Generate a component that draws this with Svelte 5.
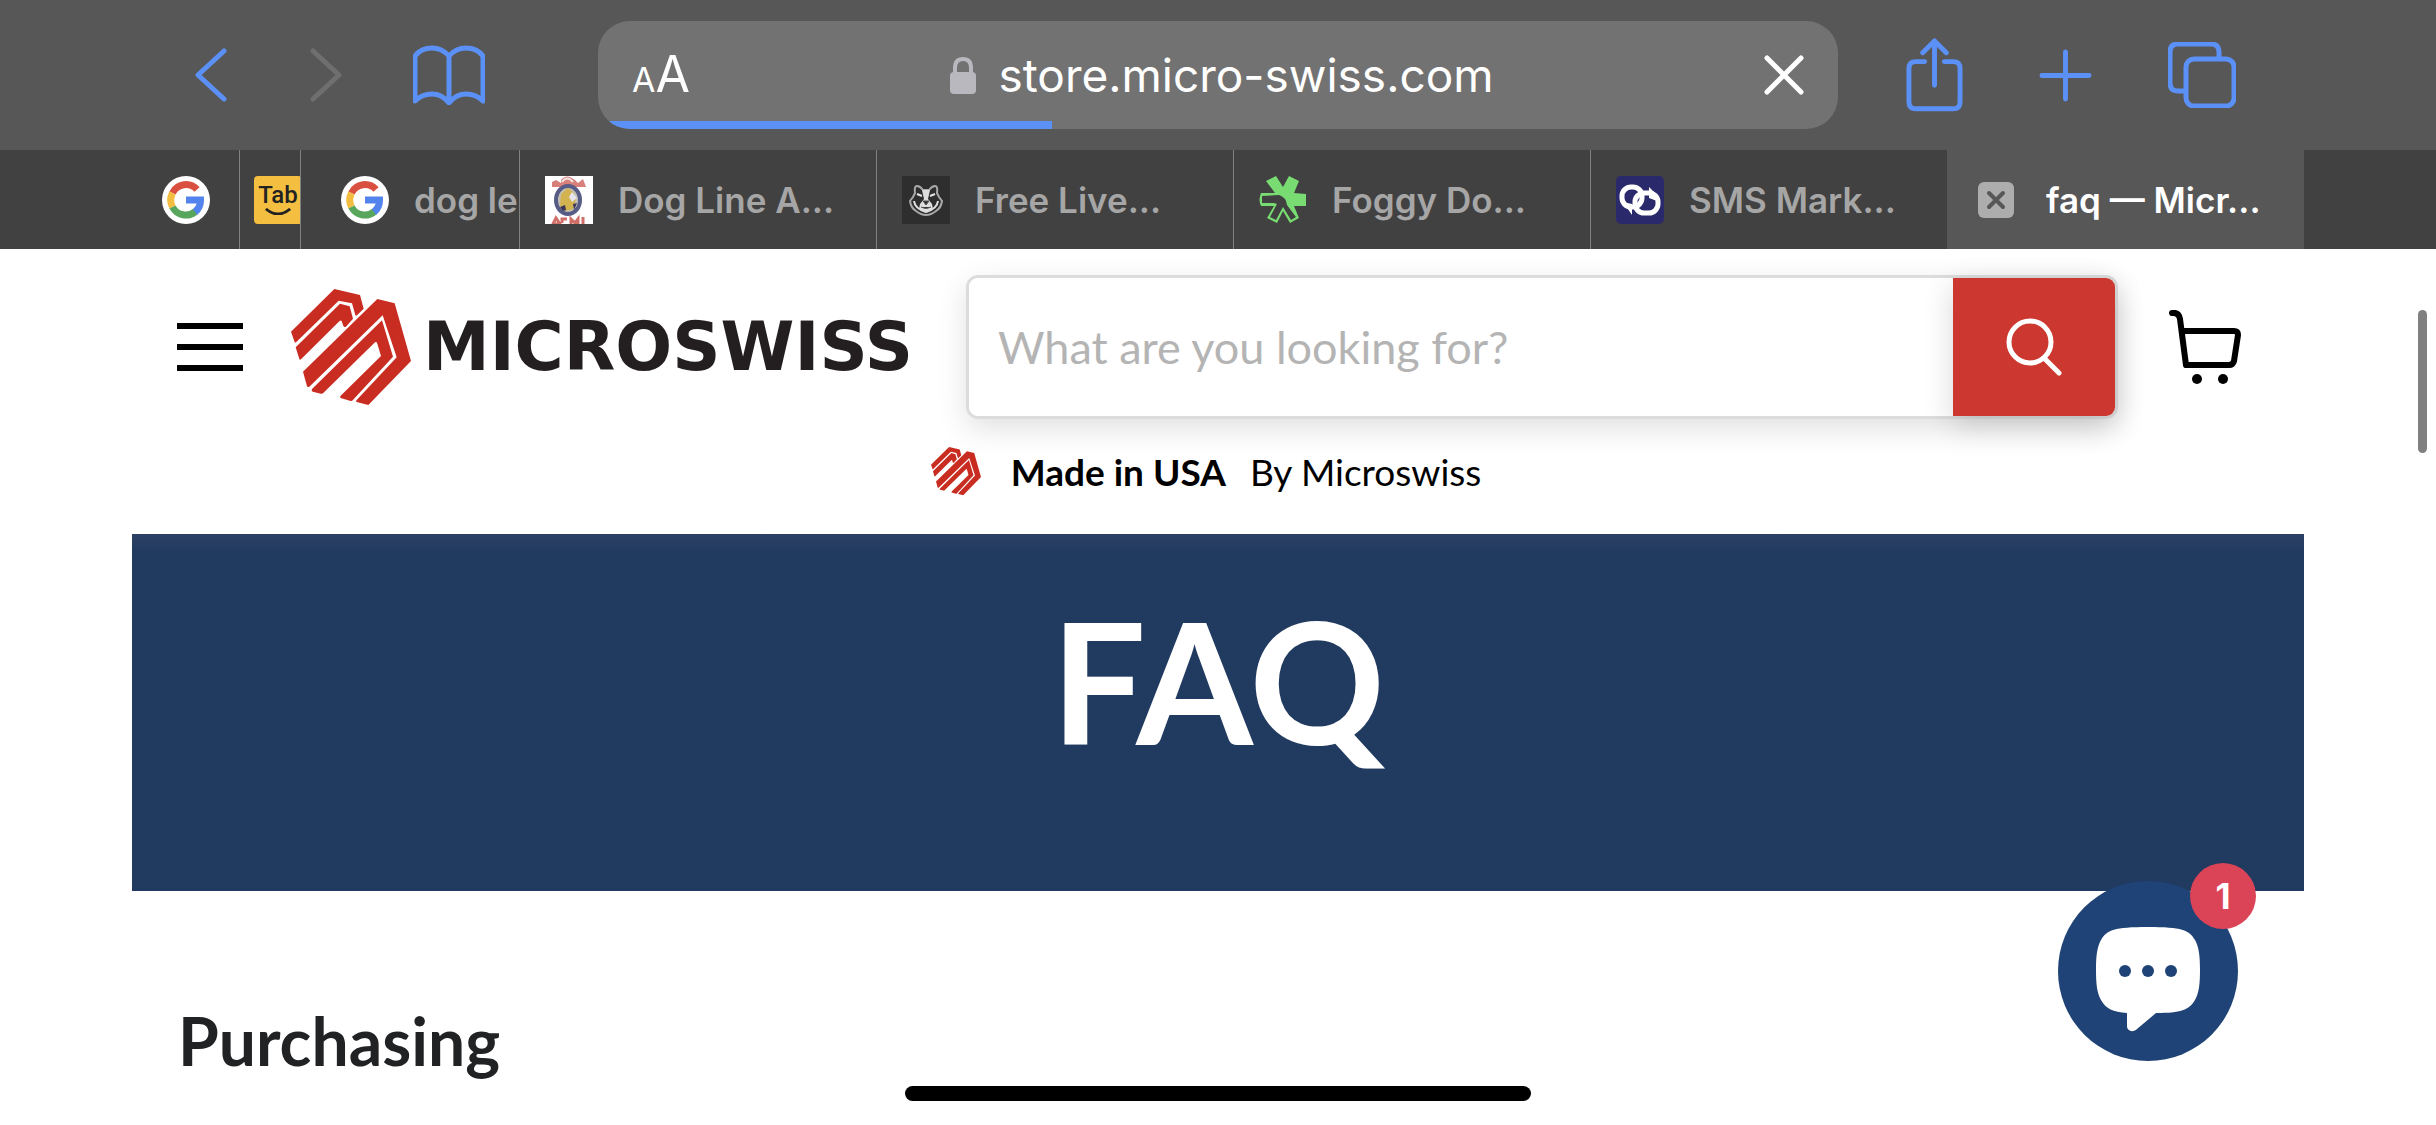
<script lang="ts">
  type Tab = { icon: string; title: string };

  const tabs: Tab[] = [
    { icon: 'google', title: '' },
    { icon: 'tab', title: '' },
    { icon: 'google', title: 'dog le' },
    { icon: 'crest', title: 'Dog Line A...' },
    { icon: 'husky', title: 'Free Live...' },
    { icon: 'clover', title: 'Foggy Do...' },
    { icon: 'rings', title: 'SMS Mark...' },
  ];

  let query = $state('');
  let address = $state('store.micro-swiss.com');
</script>

{#snippet emblem()}
  <svg class="emblem" viewBox="423 87 360 348" aria-hidden="true">
    <path d="M423 215 553 87l77 18 11 41-20 20q-4 2-5-1l-10-35-40-8-127 124q-5 4-6-2z" />
    <path d="m437 262 133-131 29 8 10 37-21 24q-5 3-8-2l-5-15q-2-4-7 1L453 298q-4 3-5-1z" />
    <path d="m459 335 223-218 52 13 49 173-128 132-35-9q-4-2 0-6l120-128-42-126-220 214q-4 3-7-1z" />
    <path d="m486 387 210-206 33 109-121 131q-2 3-6 2l-30-9q-4-2 0-7l121-119-12-40q-2-4-6-1L519 400q-2 2-6 1l-25-6q-5-3-2-8z" />
  </svg>
{/snippet}

{#snippet favicon(kind: string)}
  {#if kind === 'google'}
    <svg class="fav" viewBox="0 0 48 48" aria-hidden="true">
      <circle cx="24" cy="24" r="24" fill="#fff" />
      <g fill="none" stroke-width="7">
        <path d="M35 13.5A15 15 0 0 0 10.500 17" stroke="#d95040" />
        <path d="M10.500 17a15 15 0 0 0 0 14" stroke="#f3bd42" />
        <path d="M10.500 31A15 15 0 0 0 33.500 35.500" stroke="#58a55c" />
        <path d="M33 36a15 15 0 0 0 5.500-12H24" stroke="#5383ec" />
      </g>
    </svg>
  {:else if kind === 'tab'}
    <span class="fav tabfav"><b>Tab</b>
      <svg viewBox="0 0 30 8" aria-hidden="true"><path d="M2 1q13 11 26 0" fill="none" stroke="#222" stroke-width="3" /></svg>
    </span>
  {:else if kind === 'crest'}
    <svg class="fav" viewBox="0 0 48 48" aria-hidden="true">
      <path fill="#fff" d="M0 0h48v48H0z" />
      <path d="M7 11V6l4-2 5 3V4q4-5 9-3l5 3 3 3 5-4 3 8z" fill="#d8817b" />
      <path d="M17 6q5-7 11 0" fill="none" stroke="#f2e3e1" stroke-width="2" />
      <ellipse cx="23" cy="24" rx="12" ry="14" fill="#c5c0b4" stroke="#565c86" stroke-width="4" />
      <path d="m16 18 7-6 5 4 3 7-3 10-8 2-5-5z" fill="#d3b250" />
      <path d="m27 16 5 6-5 4-3-5z" fill="#e6e6f0" />
      <path d="m15 31 5-2 1 5-3 1zM28 28l4-1-3 7z" fill="#3c3558" />
      <path d="m8 48 3-6 4 6zM17 47v-4h5M26 48v-5l4 4 3-4v5M38 41v7" fill="none" stroke="#d06f68" stroke-width="3" />
    </svg>
  {:else if kind === 'husky'}
    <svg class="fav" viewBox="0 0 48 48" aria-hidden="true">
      <path fill="#2e2e2e" d="M0 0h48v48H0z" />
      <path d="M13 17q-1-7 2-7 3 0 6 4h6q3-4 6-4 3 0 2 7l2 4 3 4q-1 7-6 10-5 4-10 4t-10-4q-5-3-6-10l3-4z" fill="#2e2e2e" stroke="#a9a9a9" stroke-width="2" />
      <path d="M12 25q1 8 12 11 11-3 12-11" fill="none" stroke="#e3e3e3" stroke-width="2" />
      <path d="M20 14h8l-2 9 4 5 1 5q-7 5-14 0l1-5 4-5z" fill="#dedede" />
      <path d="m15 18 5 2m13-2-5 2" stroke="#e3e3e3" stroke-width="2" />
      <path d="M21 25h6l-3 4zM19 31q5 3 10 0" fill="#2e2e2e" stroke="#555" />
    </svg>
  {:else if kind === 'clover'}
    <svg class="fav" viewBox="0 0 48 48" aria-hidden="true">
      <path d="M7 5 17 0l7 11 6-11 10 5-5 12 12 1v12H35l5 12-9 5-7-12-6 12-10-5 7-12H2Q-1 24 2 17h14Z" fill="#78dc72" />
      <path d="m3 20 17-1q7 2 8 10l9 12-5 3-8-13-7 13-6-3 7-13-3-1H3z" fill="#414141" />
    </svg>
  {:else}
    <svg class="fav" viewBox="0 0 48 48" aria-hidden="true">
      <rect width="48" height="48" rx="5" fill="#29296c" />
      <g fill="none" stroke="#fff" stroke-width="5">
        <rect x="6" y="11" width="20" height="20" rx="9" />
        <rect x="19" y="17" width="23" height="20" rx="9" />
      </g>
      <path d="m7 26 9 13V28zM33 11l8 8v6l-8-3z" fill="#fff" />
    </svg>
  {/if}
{/snippet}

<div class="screen">
  <header class="browser">
    <div class="toolbar">
      <nav class="navigation" aria-label="Browser navigation">
        <button class="chev" aria-label="Back">
          <svg viewBox="0 0 32 54"><path d="M29 3 3 27l26 24" /></svg>
        </button>
        <button class="chev off" aria-label="Forward" disabled>
          <svg viewBox="0 0 32 54"><path d="m3 3 26 24L3 51" /></svg>
        </button>
        <button class="book" aria-label="Bookmarks">
          <svg viewBox="0 0 72 60"><path d="M36 11Q29 3 19 3 8 3 2 11v45q7-7 17-7t17 9q7-9 17-9t17 7V11Q64 3 53 3q-10 0-17 8zv46" /></svg>
        </button>
      </nav>

      <div class="address">
        <button class="aa" aria-label="Page settings"><span>A</span><span class="big">A</span></button>
        <label class="url">
          <svg class="lock" viewBox="0 0 26 37" aria-hidden="true">
            <rect y="15" width="26" height="22" rx="4" fill="#b9b8be" />
            <path d="M5 17v-6q0-9 8-9t8 9v6" fill="none" stroke="#b9b8be" stroke-width="4" />
          </svg>
          <input type="text" bind:value={address} size="21" aria-label="Address" />
        </label>
        <button class="stop" aria-label="Stop loading">
          <svg viewBox="0 0 40 40"><path d="m3 3 34 34M37 3 3 37" /></svg>
        </button>
        <div class="progress"></div>
      </div>

      <div class="actions">
        <button class="share" aria-label="Share">
          <svg viewBox="0 0 58 76"><path d="M19 24H10q-7 0-7 7v34q0 7 7 7h38q7 0 7-7V31q0-7-7-7h-9M29 48V3M17 15 29 3l12 12" /></svg>
        </button>
        <button class="plus" aria-label="New tab">
          <svg viewBox="0 0 54 54"><path d="M27 3v48M3 27h48" /></svg>
        </button>
        <button class="pages" aria-label="Show tabs">
          <svg viewBox="0 0 68 66"><path d="M16 49h-6q-8 0-8-8V10q0-8 8-8h33q8 0 8 8v5" /><rect x="18" y="17" width="48" height="47" rx="8" /></svg>
        </button>
      </div>
    </div>

    <div class="tabs">
      {#each tabs as tab}
        <button class="tab {tab.icon}" class:titled={tab.title !== ''} aria-label={tab.title || tab.icon}>
          {@render favicon(tab.icon)}
          {#if tab.title}<span class="title">{tab.title}</span>{/if}
        </button>
      {/each}
      <div class="tab active">
        <button class="close" aria-label="Close tab">
          <svg viewBox="0 0 36 36"><path d="m11 11 14 14M25 11 11 25" /></svg>
        </button>
        <span class="title">faq — Micr...</span>
      </div>
    </div>
  </header>

  <div class="store">
    <div class="masthead">
      <button class="menu" aria-label="Menu"><i></i><i></i><i></i></button>
      <a class="brand" href="#home">{@render emblem()}<span>MICROSWISS</span></a>
      <form class="search">
        <input type="search" bind:value={query} placeholder="What are you looking for?" aria-label="Search" />
        <button type="button" aria-label="Search">
          <svg viewBox="0 0 56 60"><circle cx="24" cy="25" r="21" /><path d="m38 41 15 15" /></svg>
        </button>
      </form>
      <a class="cart" href="#cart" aria-label="Cart">
        <svg viewBox="0 0 72 74">
          <path d="M3 3q7-1 8 6l6 46h43q4 0 5-4l4-26q0-4-4-4H13" fill="none" stroke="#000" stroke-width="6" stroke-linecap="round" stroke-linejoin="round" />
          <circle cx="28" cy="69" r="5" /><circle cx="54" cy="69" r="5" />
        </svg>
      </a>
    </div>
    <p class="origin">{@render emblem()}<strong>Made in USA</strong><span>By Microswiss</span></p>
  </div>

  <main>
    <section class="hero"><h1>FAQ</h1></section>
    <h2>Purchasing</h2>
  </main>

  <button class="chat" aria-label="Open chat, 1 new message">
    <svg viewBox="0 0 104 106" aria-hidden="true">
      <path d="M52 0C86 0 93 3 99 13c4 7 5 16 5 30s-1 23-5 30c-6 10-14 13-39 13L41 102c-4 4-10 2-10-3V86C17 85 10 82 5 73 1 66 0 57 0 43s1-23 5-30C11 3 18 0 52 0z" fill="#fff" />
      <g fill="#1f4376"><circle cx="29" cy="44" r="6" /><circle cx="52" cy="44" r="6" /><circle cx="75" cy="44" r="6" /></g>
    </svg>
    <span class="badge">1</span>
  </button>
  <div class="scrollbar"></div>
  <div class="home"></div>
</div>

<style>
  :global(body) { margin: 0; background: #fff; }
  .screen {
    position: relative;
    min-height: 100vh;
    overflow: hidden;
    font-family: Lato, sans-serif;
    color: #000;
  }
  button, input { font: inherit; color: inherit; border: 0; padding: 0; margin: 0; background: none; outline: 0; }
  button { cursor: pointer; }
  svg { display: block; width: 100%; }
  a { color: inherit; text-decoration: none; }

  .browser { background: #575757; font-family: Inter, sans-serif; }
  .toolbar { display: flex; align-items: center; height: 150px; padding: 0 200px 0 195px; box-sizing: border-box; }
  .navigation, .actions { display: flex; align-items: center; }
  .navigation { gap: 71px; margin-right: 113px; }
  .navigation svg, .actions svg { fill: none; stroke: #5b91f7; stroke-width: 5; stroke-linecap: round; stroke-linejoin: round; }
  .actions { gap: 76px; margin-left: 68px; }
  .chev { width: 32px; }
  .off { margin: 0 0 0 12px; }
  .navigation .off svg { stroke: #6f6f6f; }
  .book { width: 72px; }
  .share { width: 57px; }
  .plus { width: 53px; }
  .pages { width: 68px; }

  .address {
    position: relative;
    flex: 1;
    display: grid;
    grid-template-columns: 1fr auto 1fr;
    align-items: center;
    height: 108px;
    padding: 0 34px;
    box-sizing: border-box;
    border-radius: 32px;
    overflow: hidden;
    background: #727272;
    color: #fff;
  }
  .aa { justify-self: start; display: flex; align-items: baseline; padding-top: 4px; font-size: 34px; line-height: 56px; }
  .aa .big { font-size: 50px; }
  .url { display: flex; align-items: center; gap: 22px; padding-left: 8px; }
  .lock { width: 26px; }
  .url input { field-sizing: content; font-size: 46px; line-height: 60px; }
  .stop { justify-self: end; width: 40px; }
  .stop svg { stroke: #fff; stroke-width: 5; stroke-linecap: round; }
  .progress { position: absolute; left: 0; bottom: 0; width: 454px; height: 8px; background: #5b91f7; }

  .tabs {
    display: grid;
    grid-template-columns: 107px 61px 219px repeat(5, minmax(0, 1fr));
    height: 99px;
    padding: 0 132px;
    background: #414141;
  }
  .tab {
    display: flex;
    align-items: center;
    gap: 25px;
    overflow: hidden;
    box-sizing: border-box;
    min-width: 0;
    padding-left: 25px;
    border-left: 1px solid #808080;
    color: #a6a6a6;
    font-size: 35px;
    font-weight: 600;
    white-space: nowrap;
    text-align: left;
  }
  .tab:first-child { border-left-color: transparent; padding-left: 29px; }
  .tab:nth-child(2) { padding-left: 14px; }
  .google.titled { padding-left: 40px; }
  .fav { flex: none; width: 48px; height: 48px; }
  .tabfav { display: flex; flex-direction: column; align-items: center; border-radius: 4px; background: #f4be40; color: #222; font-family: Roboto, sans-serif; font-size: 24px; line-height: 26px; padding-top: 6px; box-sizing: border-box; }
  .tabfav b { font-weight: 500; }
  .tabfav svg { width: 28px; }
  .active { gap: 32px; padding-left: 30px; border-left-color: #575757; background: #575757; color: #fff; }
  .close { flex: none; width: 36px; height: 36px; border-radius: 6px; background: #adadad; }
  .close svg { stroke: #575757; stroke-width: 4; stroke-linecap: round; }

  .masthead { display: flex; align-items: center; padding: 26px 195px 0 177px; }
  .menu { display: grid; gap: 15px; width: 66px; margin-right: 48px; }
  .menu i { height: 6px; background: #000; }
  .emblem { flex: none; width: 120px; fill: #c92d22; }
  .brand { display: flex; align-items: center; gap: 12px; width: 675px; color: #231f20; font-family: "DejaVu Sans", sans-serif; font-size: 67px; line-height: 72px; font-weight: 700; }
  .search {
    flex: 1;
    display: flex;
    height: 144px;
    box-sizing: border-box;
    border: 3px solid #dcdcdc;
    border-radius: 12px;
    box-shadow: 0 10px 30px rgba(0, 0, 0, 0.12);
  }
  .search input { flex: 1; min-width: 0; padding: 0 29px; font-size: 45px; border-radius: 9px 0 0 9px; background: #fff; }
  .search input::placeholder { color: #b4b4b4; opacity: 1; }
  .search button { width: 162px; padding: 0 53px; border-radius: 0 9px 9px 0; background: #cc382f; box-shadow: 0 8px 30px rgba(0, 0, 0, 0.16); }
  .search svg { fill: none; stroke: #fff; stroke-width: 5; stroke-linecap: round; }
  .cart { width: 72px; margin-left: 51px; }
  .origin { display: flex; align-items: center; justify-content: center; margin: 0; height: 115px; padding: 0 24px 10px 0; box-sizing: border-box; font-size: 37px; line-height: 48px; }
  .origin .emblem { width: 50px; margin-right: 30px; }
  .origin strong { margin-right: 24px; }

  .hero {
    display: flex;
    justify-content: center;
    height: 357px;
    margin: 0 132px;
    padding-top: 36px;
    box-sizing: border-box;
    background: linear-gradient(#2c4265, #213a5f 18px);
    color: #fff;
  }
  h1 { margin: 0; font-size: 168px; line-height: 220px; font-weight: 700; }
  h2 { margin: 106px 178px 0; color: #202224; font-size: 66px; line-height: 88px; font-weight: 700; }

  .chat { position: absolute; right: 198px; bottom: 64px; width: 180px; height: 180px; padding: 18px 38px 0; border-radius: 50%; background: #1f4376; }
  .badge { position: absolute; top: -18px; right: -18px; width: 66px; border-radius: 50%; background: #db4457; color: #fff; font: 700 35px/66px Inter, sans-serif; }
  .scrollbar { position: absolute; top: 310px; right: 9px; width: 9px; height: 143px; border-radius: 5px; background: #808080; }
  .home { position: absolute; bottom: 24px; left: 50%; width: 626px; height: 15px; margin-left: -313px; border-radius: 8px; background: #000; }
</style>
